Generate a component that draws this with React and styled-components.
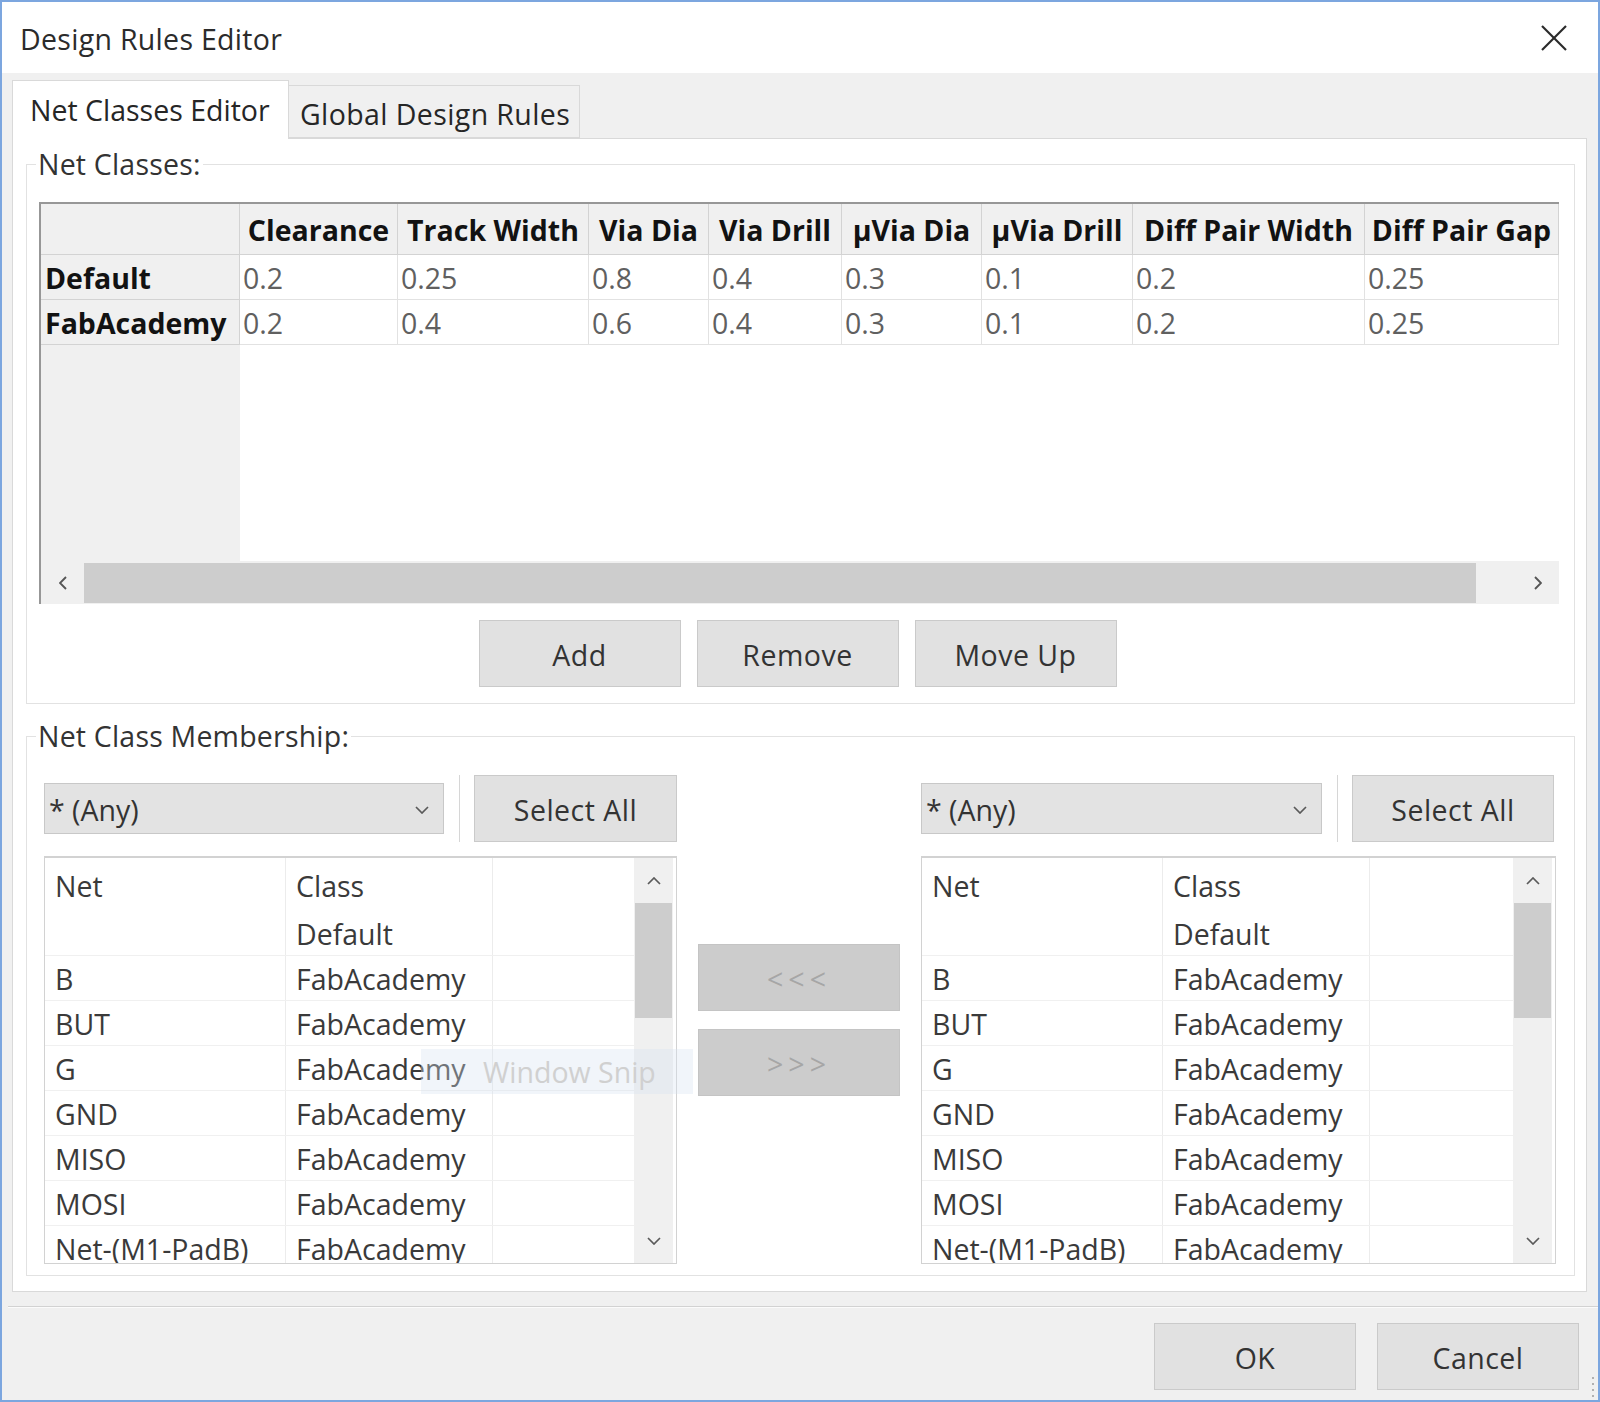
import React from 'react';
import styled, { createGlobalStyle } from 'styled-components';

const GlobalStyle = createGlobalStyle`
  html, body {
    margin: 0;
    padding: 0;
    background: #f0f0f0;
  }
  body {
    font-family: "Open Sans", "Noto Sans", sans-serif;
  }
  * {
    box-sizing: border-box;
  }
`;

const COLUMNS = [
  { title: 'Clearance', width: 158 },
  { title: 'Track Width', width: 191 },
  { title: 'Via Dia', width: 120 },
  { title: 'Via Drill', width: 133 },
  { title: 'µVia Dia', width: 140 },
  { title: 'µVia Drill', width: 151 },
  { title: 'Diff Pair Width', width: 232 },
  { title: 'Diff Pair Gap', width: 194 },
];

const NET_CLASSES = [
  { name: 'Default', values: ['0.2', '0.25', '0.8', '0.4', '0.3', '0.1', '0.2', '0.25'] },
  { name: 'FabAcademy', values: ['0.2', '0.4', '0.6', '0.4', '0.3', '0.1', '0.2', '0.25'] },
];

const MEMBERS = [
  ['', 'Default'],
  ['B', 'FabAcademy'],
  ['BUT', 'FabAcademy'],
  ['G', 'FabAcademy'],
  ['GND', 'FabAcademy'],
  ['MISO', 'FabAcademy'],
  ['MOSI', 'FabAcademy'],
  ['Net-(M1-PadB)', 'FabAcademy'],
];

const Chevron = ({ dir = 'down', size = 14 }) => {
  const pts = {
    down: '1,1 7,7 13,1',
    up: '1,7 7,1 13,7',
  };
  if (dir === 'left' || dir === 'right') {
    return (
      <svg width={8} height={size} viewBox="0 0 8 14">
        <polyline
          points={dir === 'left' ? '7,1 1,7 7,13' : '1,1 7,7 1,13'}
          fill="none"
          stroke="#555"
          strokeWidth="1.9"
        />
      </svg>
    );
  }
  return (
    <svg width={size} height={8} viewBox="0 0 14 8">
      <polyline points={pts[dir]} fill="none" stroke="#5a5a5a" strokeWidth="1.7" />
    </svg>
  );
};

const App = () => {
  return (
    <>
      <GlobalStyle />
      <Window>
        <TitleBar>
          <Title>Design Rules Editor</Title>
          <CloseButton>
            <svg width="28" height="28" viewBox="0 0 28 28">
              <line x1="2" y1="2" x2="26" y2="26" stroke="#2a2a2a" strokeWidth="2.2" />
              <line x1="26" y1="2" x2="2" y2="26" stroke="#2a2a2a" strokeWidth="2.2" />
            </svg>
          </CloseButton>
        </TitleBar>

        <TabStrip>
          <Tab $active>Net Classes Editor</Tab>
          <Tab>Global Design Rules</Tab>
        </TabStrip>

        <TabPage>
          <GroupBox $first>
            <Legend>Net Classes:</Legend>
            <ClassesBody>
              <GridBox>
                <Grid>
                  <CornerCell />
                  {COLUMNS.map((c) => (
                    <HeaderCell key={c.title}>{c.title}</HeaderCell>
                  ))}
                  {NET_CLASSES.map((row) => (
                    <React.Fragment key={row.name}>
                      <RowLabel>{row.name}</RowLabel>
                      {row.values.map((v, i) => (
                        <ValueCell key={i}>{v}</ValueCell>
                      ))}
                    </React.Fragment>
                  ))}
                  <EmptyLabel />
                  <EmptyArea />
                </Grid>
                <HScroll>
                  <ArrowBox>
                    <Chevron dir="left" />
                  </ArrowBox>
                  <HThumb />
                  <HTrack />
                  <ArrowBox>
                    <Chevron dir="right" />
                  </ArrowBox>
                </HScroll>
              </GridBox>
              <ButtonRow>
                <Button>Add</Button>
                <Button>Remove</Button>
                <Button>Move Up</Button>
              </ButtonRow>
            </ClassesBody>
          </GroupBox>

          <GroupBox>
            <Legend>Net Class Membership:</Legend>
            <MembershipBody>
              <FilterRow>
                <Dropdown $w={400}>
                  <span>* (Any)</span>
                  <Chevron dir="down" />
                </Dropdown>
                <Divider />
                <Button $w={203}>Select All</Button>
              </FilterRow>
              <div />
              <FilterRow>
                <Dropdown $w={401}>
                  <span>* (Any)</span>
                  <Chevron dir="down" />
                </Dropdown>
                <Divider />
                <Button $w={202}>Select All</Button>
              </FilterRow>

              <MemberList />
              <MoveColumn>
                <Button $disabled>&lt;&lt;&lt;</Button>
                <Button $disabled>&gt;&gt;&gt;</Button>
              </MoveColumn>
              <MemberList />
            </MembershipBody>
          </GroupBox>
        </TabPage>

        <Separator />
        <Footer>
          <Button>OK</Button>
          <Button>Cancel</Button>
        </Footer>

        <SnipHint>Window Snip</SnipHint>
        <Grip>
          <svg width="10" height="22" viewBox="0 0 10 22">
            {[3, 9, 15, 21].map((y) => (
              <rect key={y} x="6" y={y - 2} width="2" height="2" fill="#b0b0b0" />
            ))}
          </svg>
        </Grip>
      </Window>
    </>
  );
};

const MemberList = () => (
  <ListBox>
    <ListBody>
      <ListRow $header>
        <ListCell $w={241}>Net</ListCell>
        <ListCell $w={207}>Class</ListCell>
        <ListCell $last />
      </ListRow>
      {MEMBERS.map(([net, cls], i) => (
        <ListRow key={i}>
          <ListCell $w={241}>{net}</ListCell>
          <ListCell $w={207}>{cls}</ListCell>
          <ListCell $last />
        </ListRow>
      ))}
    </ListBody>
    <VScroll>
      <VArrow>
        <Chevron dir="up" />
      </VArrow>
      <VThumb />
      <VSpacer />
      <VArrow $bottom>
        <Chevron dir="down" />
      </VArrow>
    </VScroll>
  </ListBox>
);

const Window = styled.div`
  position: relative;
  width: 1600px;
  height: 1402px;
  border: 2px solid #7ca6df;
  background: #f0f0f0;
  display: flex;
  flex-direction: column;
  font-size: 28.5px;
  color: #333;
  overflow: hidden;
`;

const TitleBar = styled.div`
  flex: none;
  height: 71px;
  background: #fff;
  display: flex;
  align-items: center;
  justify-content: space-between;
  padding: 0 30px 0 18px;
`;

const Title = styled.div`
  color: #2b2b2b;
  padding-top: 2px;
  letter-spacing: 0.3px;
`;

const CloseButton = styled.div`
  display: flex;
  align-items: center;
`;

const TabStrip = styled.div`
  flex: none;
  height: 65px;
  display: flex;
  align-items: flex-end;
  padding-left: 10px;
`;

const Tab = styled.div`
  position: relative;
  z-index: ${({ $active }) => ($active ? 1 : 0)};
  height: ${({ $active }) => ($active ? '59px' : '53px')};
  width: ${({ $active }) => ($active ? '277px' : '291px')};
  margin-bottom: ${({ $active }) => ($active ? '-1px' : '0')};
  padding-left: ${({ $active }) => ($active ? '17px' : '11px')};
  padding-top: ${({ $active }) => ($active ? '0' : '4px')};
  display: flex;
  align-items: center;
  background: ${({ $active }) => ($active ? '#fff' : '#f0f0f0')};
  border: 1px solid #d9d9d9;
  border-bottom: ${({ $active }) => ($active ? 'none' : '1px solid #d9d9d9')};
  border-left: ${({ $active }) => ($active ? '1px solid #d9d9d9' : 'none')};
  color: #262626;
  letter-spacing: ${({ $active }) => ($active ? '0' : '0.4px')};
  white-space: nowrap;
`;

const TabPage = styled.div`
  flex: none;
  height: 1154px;
  margin: 0 11px 0 10px;
  background: #fff;
  border: 1px solid #d9d9d9;
  padding: 0 11px 0 13px;
`;

const GroupBox = styled.fieldset`
  margin: ${({ $first }) => ($first ? '5px 0 0 0' : '12px 0 0 0')};
  padding: 0;
  border: 1px solid #e2e2e2;
  min-width: 0;
`;

const Legend = styled.legend`
  margin-left: 9px;
  padding: 0 2px;
  line-height: 40px;
  color: #333;
  letter-spacing: 0.2px;
`;

const ClassesBody = styled.div`
  padding: 18px 15px 16px 12px;
`;

const GridBox = styled.div`
  width: 1520px;
  height: 402px;
  border-top: 2px solid #979797;
  border-left: 2px solid #979797;
  display: flex;
  flex-direction: column;
  overflow: hidden;
`;

const Grid = styled.div`
  flex: 1;
  display: grid;
  grid-template-columns: 199px ${COLUMNS.map((c) => `${c.width}px`).join(' ')};
  grid-template-rows: 51px 45px 45px 1fr;
`;

const CornerCell = styled.div`
  background: #f0f0f0;
  border-right: 1px solid #d3d3d3;
  border-bottom: 1px solid #d3d3d3;
`;

const HeaderCell = styled.div`
  background: #f0f0f0;
  border-right: 1px solid #d3d3d3;
  border-bottom: 1px solid #d3d3d3;
  display: flex;
  align-items: center;
  justify-content: center;
  font-weight: 700;
  color: #121212;
  white-space: nowrap;
  overflow: hidden;
  padding-top: 2px;
`;

const RowLabel = styled.div`
  background: #f0f0f0;
  border-right: 1px solid #d3d3d3;
  border-bottom: 1px solid #d3d3d3;
  display: flex;
  align-items: center;
  padding-left: 4px;
  padding-top: 2px;
  font-weight: 700;
  color: #121212;
  white-space: nowrap;
`;

const ValueCell = styled.div`
  border-right: 1px solid #e2e2e2;
  border-bottom: 1px solid #e2e2e2;
  display: flex;
  align-items: center;
  padding-left: 3px;
  padding-top: 2px;
  color: #606060;
`;

const EmptyLabel = styled.div`
  background: #f0f0f0;
`;

const EmptyArea = styled.div`
  grid-column: span ${COLUMNS.length};
  background: #fff;
`;

const HScroll = styled.div`
  flex: none;
  height: 43px;
  background: #f0f0f0;
  display: flex;
  padding: 2px 0 1px;
`;

const ArrowBox = styled.div`
  flex: none;
  width: 43px;
  display: flex;
  align-items: center;
  justify-content: center;
`;

const HThumb = styled.div`
  flex: 1;
  background: #cdcdcd;
`;

const HTrack = styled.div`
  flex: none;
  width: 40px;
`;

const ButtonRow = styled.div`
  margin-top: 16px;
  display: flex;
  justify-content: center;
  gap: 16px;
  padding-right: 3px;
`;

const Button = styled.div`
  flex: none;
  width: ${({ $w }) => ($w ? `${$w}px` : '202px')};
  height: 67px;
  display: flex;
  align-items: center;
  justify-content: center;
  padding-top: 2px;
  background: ${({ $disabled }) => ($disabled ? '#cccccc' : '#e1e1e1')};
  border: 1px solid ${({ $disabled }) => ($disabled ? '#c4c4c4' : '#cacaca')};
  color: ${({ $disabled }) => ($disabled ? '#a6a6a6' : '#333')};
  letter-spacing: ${({ $disabled }) => ($disabled ? '5px' : '0.5px')};
  white-space: nowrap;
`;

const MembershipBody = styled.div`
  padding: 19px 18px 11px 17px;
  display: grid;
  grid-template-columns: 633px 202px 635px;
  grid-template-rows: 67px 408px;
  column-gap: 21px;
  row-gap: 14px;
`;

const FilterRow = styled.div`
  display: flex;
  align-items: center;
`;

const Dropdown = styled.div`
  flex: none;
  width: ${({ $w }) => $w}px;
  height: 51px;
  background: #e3e3e3;
  border: 1px solid #c8c8c8;
  display: flex;
  align-items: center;
  justify-content: space-between;
  padding: 2px 14px 0 4px;
  color: #333;
`;

const Divider = styled.div`
  flex: none;
  width: 1px;
  height: 67px;
  margin: 0 14px 0 15px;
  background: #d6d6d6;
`;

const MoveColumn = styled.div`
  padding-top: 88px;
  display: flex;
  flex-direction: column;
  gap: 18px;
`;

const ListBox = styled.div`
  border: 1px solid #d2d2d2;
  border-top: 2px solid #d2d2d2;
  background: #fff;
  display: flex;
  padding-right: 3px;
  overflow: hidden;
`;

const ListBody = styled.div`
  flex: 1;
  display: flex;
  flex-direction: column;
  overflow: hidden;
`;

const ListRow = styled.div`
  flex: none;
  display: flex;
  height: ${({ $header }) => ($header ? '53px' : '45px')};
  border-bottom: ${({ $header }) => ($header ? 'none' : '1px solid #f0f0f0')};
`;

const ListCell = styled.div`
  flex: ${({ $last }) => ($last ? '1' : 'none')};
  width: ${({ $w }) => ($w ? `${$w}px` : 'auto')};
  border-right: ${({ $last }) => ($last ? 'none' : '1px solid #ececec')};
  display: flex;
  align-items: center;
  padding-left: 10px;
  padding-top: 2px;
  color: #3a3a3a;
  white-space: nowrap;
  overflow: hidden;
`;

const VScroll = styled.div`
  flex: none;
  width: 39px;
  background: #f0f0f0;
  display: flex;
  flex-direction: column;
`;

const VArrow = styled.div`
  flex: none;
  height: ${({ $bottom }) => ($bottom ? '44px' : '45px')};
  display: flex;
  align-items: center;
  justify-content: center;
`;

const VThumb = styled.div`
  flex: none;
  height: 115px;
  margin: 0 1px;
  background: #cdcdcd;
`;

const VSpacer = styled.div`
  flex: 1;
`;

const Separator = styled.div`
  flex: none;
  margin: 14px 0 0 6px;
  height: 2px;
  border-top: 1px solid #d2d2d2;
  border-bottom: 1px solid #fbfbfb;
`;

const Footer = styled.div`
  flex: 1;
  display: flex;
  justify-content: flex-end;
  align-items: flex-start;
  gap: 21px;
  padding: 15px 19px 0 0;
`;

const SnipHint = styled.div`
  position: absolute;
  left: 419px;
  top: 1047px;
  width: 272px;
  height: 45px;
  padding-left: 62px;
  display: flex;
  align-items: center;
  background: rgba(214, 226, 240, 0.35);
  color: #d0d0d0;
  white-space: nowrap;
`;

const Grip = styled.div`
  position: absolute;
  right: 2px;
  bottom: 2px;
  display: flex;
`;

export default App;
